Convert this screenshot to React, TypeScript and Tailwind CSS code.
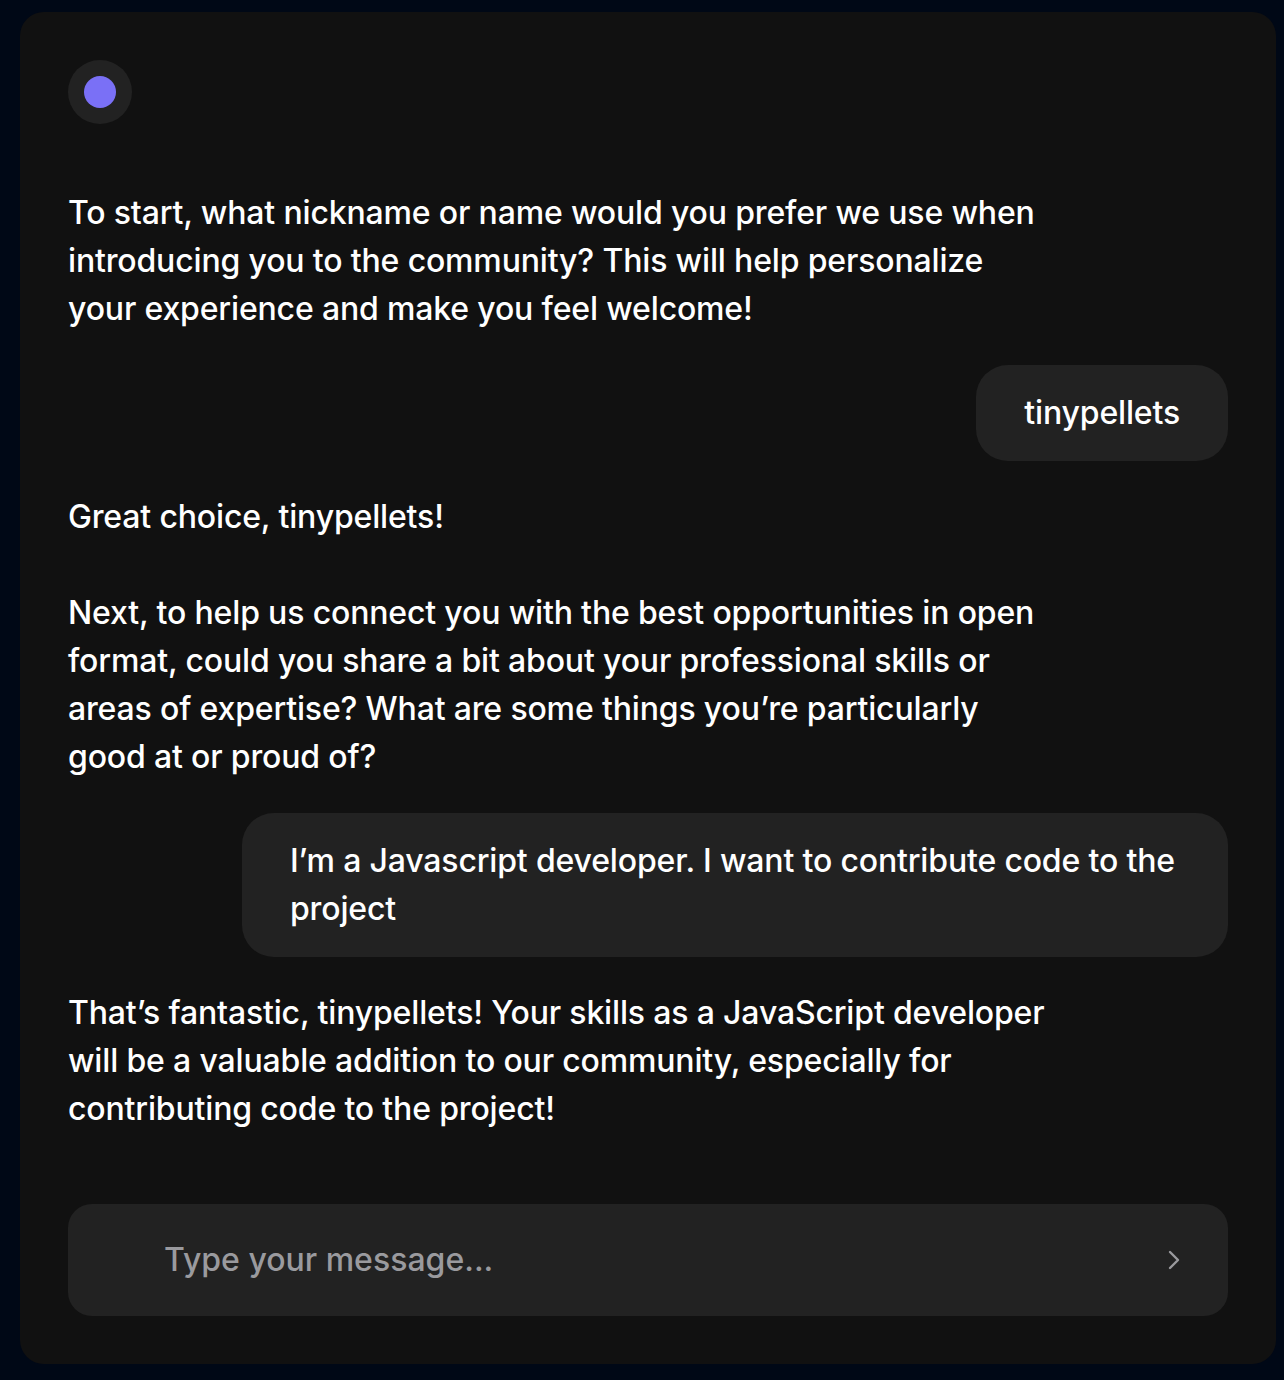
import React from "react";

const font = { fontFamily: "Inter, 'Noto Sans', sans-serif" };

function AssistantMsg({ text }: { text: string }) {
  return (
    <div className="max-w-[85%] whitespace-pre-wrap text-[32px] leading-[48px] font-medium tracking-[-0.005em] text-white self-start">
      {text}
    </div>
  );
}

function UserMsg({ text }: { text: string }) {
  return (
    <div className="self-end max-w-[85%] rounded-[32px] bg-[#222222] px-12 py-6 text-[32px] leading-[48px] font-medium tracking-[-0.005em] text-white">
      {text}
    </div>
  );
}

export default function App() {
  return (
    <div className="min-h-[1380px] w-full bg-[#000816] pt-3 pb-4 pl-5 pr-2" style={font}>
      <div className="rounded-3xl bg-[#111111] p-12 flex flex-col">
        <div className="w-16 h-16 rounded-full bg-[#222222] flex items-center justify-center">
          <div className="w-8 h-8 rounded-full bg-[#7a70f6]" />
        </div>
        <div className="mt-[65px] flex flex-col gap-8">
          <AssistantMsg text={"To start, what nickname or name would you prefer we use when introducing you to the community? This will help personalize your experience and make you feel welcome!"} />
          <UserMsg text={"tinypellets"} />
          <AssistantMsg
            text={
              "Great choice, tinypellets!\n\nNext, to help us connect you with the best opportunities in open format, could you share a bit about your professional skills or areas of expertise? What are some things you\u2019re particularly good at or proud of?"
            }
          />
          <UserMsg text={"I\u2019m a Javascript developer. I want to contribute code to the project"} />
          <AssistantMsg text={"That\u2019s fantastic, tinypellets! Your skills as a JavaScript developer will be a valuable addition to our community, especially for contributing code to the project!"} />
        </div>
        <div className="mt-[71px] h-28 rounded-3xl bg-[#222222] flex items-center pl-24 pr-12">
          <input
            className="flex-1 bg-transparent outline-none text-[32px] leading-[48px] font-medium text-white placeholder:text-[#9a9a9e]"
            placeholder="Type your message..."
            style={font}
          />
          <svg width="12" height="20" viewBox="0 0 12 20" fill="none" className="ml-4">
            <path d="M2 2 L10 10 L2 18" stroke="#9a9a9e" strokeWidth="2.4" strokeLinecap="round" strokeLinejoin="round" />
          </svg>
        </div>
      </div>
    </div>
  );
}
